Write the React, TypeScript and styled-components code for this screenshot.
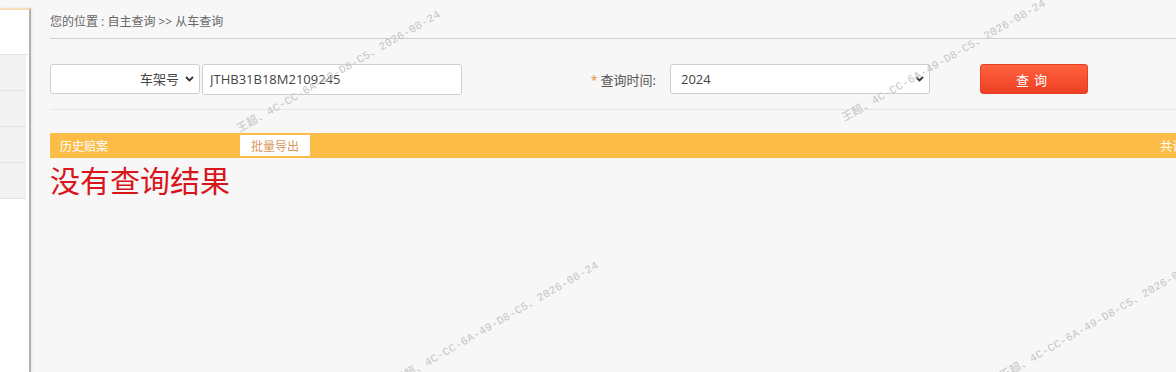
import { FC } from "react";
import styled, { createGlobalStyle } from "styled-components";

const GlobalStyle = createGlobalStyle`
  html, body {
    margin: 0;
    padding: 0;
    background: #f7f7f7;
    overflow: hidden;
  }
  body {
    font-family: "Open Sans", "Noto Sans CJK SC", sans-serif;
    color: #333;
  }
`;

const Page = styled.div`
  position: relative;
  display: flex;
  width: 1176px;
  height: 372px;
  overflow: hidden;
  background: #f7f7f7;
`;

const Sidebar = styled.div`
  flex: 0 0 29px;
  margin-top: 8px;
  background: #ffffff;
  border-top: 2px solid #f8dcb8;
  border-right: 2px solid #b3b3b3;
  box-shadow: 1px 0 2px rgba(0, 0, 0, 0.08);
  display: flex;
  flex-direction: column;
`;

const SideHead = styled.div`
  height: 44px;
  background: #ffffff;
  border-bottom: 1px solid #e4e4e4;
`;

const SideItem = styled.div`
  height: 35px;
  background: #f2f2f2;
  border-bottom: 1px solid #e2e2e2;
  margin-right: 3px;
`;

const Main = styled.div`
  flex: 1;
  min-width: 0;
  padding-left: 19px;
  overflow: hidden;
`;

const Inner = styled.div`
  width: 1163px;
`;

const Breadcrumb = styled.div`
  height: 39px;
  box-sizing: border-box;
  padding-top: 14px;
  font-size: 12px;
  line-height: 16px;
  color: #666;
  border-bottom: 1px solid #cfcfcf;
`;

const FormRow = styled.div`
  display: flex;
  align-items: center;
  margin-top: 25px;
  height: 30px;
`;

const SelectWrap = styled.div<{ $width: number }>`
  position: relative;
  width: ${(p) => p.$width}px;
  height: 30px;
`;

const Select = styled.select<{ $align?: string }>`
  appearance: none;
  width: 100%;
  height: 100%;
  box-sizing: border-box;
  border: 1px solid #cfcfcf;
  border-radius: 3px;
  background: #fff;
  font-family: "Open Sans", "Noto Sans CJK SC", sans-serif;
  font-size: 13px;
  color: #444;
  padding: 0 20px 0 10px;
  text-align: ${(p) => p.$align || "left"};
  text-align-last: ${(p) => p.$align || "left"};
  outline: none;
`;

const Chevron = styled.svg`
  position: absolute;
  right: 6px;
  top: 12px;
  pointer-events: none;
`;

const TextInput = styled.input`
  width: 260px;
  height: 31px;
  margin-left: 2px;
  box-sizing: border-box;
  border: 1px solid #cfcfcf;
  border-radius: 3px;
  background: #fff;
  padding: 0 7px;
  font-family: "Open Sans", "Noto Sans CJK SC", sans-serif;
  font-size: 13px;
  color: #444;
  outline: none;
`;

const Label = styled.label`
  width: 194px;
  padding-right: 14px;
  text-align: right;
  font-size: 13px;
  color: #555;
`;

const Star = styled.span`
  color: #e8913c;
  margin-right: 3px;
`;

const QueryButton = styled.button`
  margin-left: 50px;
  width: 108px;
  height: 30px;
  border: 1px solid #e2401f;
  border-radius: 3px;
  background: linear-gradient(#ff623f, #ee4024);
  color: #fff;
  font-family: "Open Sans", "Noto Sans CJK SC", sans-serif;
  font-size: 13px;
  letter-spacing: 5px;
  cursor: pointer;
`;

const Divider = styled.div`
  margin-top: 15px;
  height: 1px;
  background: #e6e6e6;
`;

const Bar = styled.div`
  margin-top: 23px;
  height: 25px;
  background: #fbbd48;
  display: flex;
  align-items: center;
  padding: 0 10px;
  font-size: 12px;
  color: #fff;
`;

const BarTitle = styled.span`
  width: 180px;
`;

const ExportButton = styled.button`
  width: 70px;
  height: 21px;
  border: none;
  background: #fff;
  color: #dc9a5c;
  font-family: "Open Sans", "Noto Sans CJK SC", sans-serif;
  font-size: 12px;
  padding: 0;
  cursor: pointer;
`;

const Count = styled.span`
  margin-left: auto;
`;

const Empty = styled.div`
  margin-top: 3px;
  font-size: 30px;
  line-height: 40px;
  color: #d8161c;
`;

const Watermark = styled.span<{ $x: number; $y: number }>`
  position: absolute;
  left: ${(p) => p.$x}px;
  top: ${(p) => p.$y}px;
  font-family: "Liberation Mono", "Noto Sans CJK SC", monospace;
  font-size: 11px;
  line-height: 12px;
  letter-spacing: 0.35px;
  color: #c4c4c4;
  white-space: nowrap;
  transform-origin: 0 50%;
  transform: rotate(-30deg);
  pointer-events: none;
`;

const ChevronIcon: FC = () => (
  <Chevron width="9" height="6" viewBox="0 0 9 6">
    <path d="M1 1 L4.5 4.5 L8 1" fill="none" stroke="#333" strokeWidth="1.8" />
  </Chevron>
);

const marks = [
  { x: 238, y: 124 },
  { x: 843, y: 113 },
  { x: 396, y: 375 },
  { x: 1001, y: 371 },
];

const App: FC = () => {
  return (
    <>
      <GlobalStyle />
      <Page>
        <Sidebar>
          <SideHead />
          <SideItem />
          <SideItem />
          <SideItem />
          <SideItem />
        </Sidebar>
        <Main>
          <Inner>
            <Breadcrumb>您的位置 : 自主查询 &gt;&gt; 从车查询</Breadcrumb>
            <FormRow>
              <SelectWrap $width={150}>
                <Select $align="right" defaultValue="vin">
                  <option value="vin">车架号</option>
                  <option value="plate">车牌号</option>
                </Select>
                <ChevronIcon />
              </SelectWrap>
              <TextInput defaultValue="JTHB31B18M2109245" />
              <Label>
                <Star>*</Star>查询时间:
              </Label>
              <SelectWrap $width={260}>
                <Select defaultValue="2024">
                  <option value="2024">2024</option>
                  <option value="2025">2025</option>
                </Select>
                <ChevronIcon />
              </SelectWrap>
              <QueryButton>查询</QueryButton>
            </FormRow>
            <Divider />
            <Bar>
              <BarTitle>历史赔案</BarTitle>
              <ExportButton>批量导出</ExportButton>
              <Count>共计0条</Count>
            </Bar>
            <Empty>没有查询结果</Empty>
          </Inner>
        </Main>
        {marks.map((m, i) => (
          <Watermark key={i} $x={m.x} $y={m.y}>
            王超、4C-CC-6A-49-D8-C5、2026-08-24
          </Watermark>
        ))}
      </Page>
    </>
  );
};

export default App;
